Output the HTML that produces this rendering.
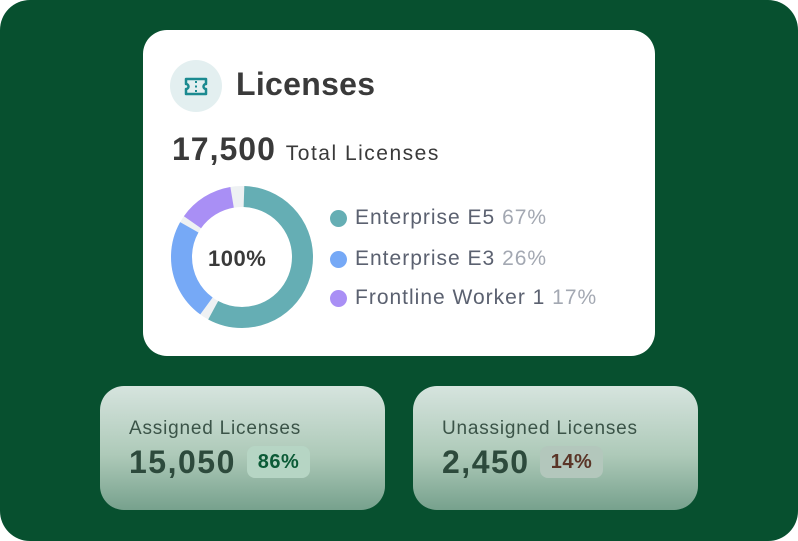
<!DOCTYPE html>
<html><head><meta charset="utf-8"><style>
*{margin:0;padding:0;box-sizing:border-box}
body{width:798px;height:541px;background:#fff;font-family:"Liberation Sans",sans-serif;overflow:hidden;position:relative}
.bg{position:absolute;left:0;top:0;width:798px;height:541px;background:#07502f;border-radius:30px}
.card{position:absolute;left:143px;top:30px;width:512px;height:326px;background:#fff;border-radius:24px}
.ic{position:absolute;left:170px;top:60px;width:52px;height:52px;border-radius:50%;background:#e3eff0}
.t{position:absolute;white-space:nowrap;color:#3a3a3a}
.dot{position:absolute;width:17px;height:17px;border-radius:50%}
.lg{font-size:21px;letter-spacing:1px;color:#5b6170}
.sc{position:absolute;top:386px;width:285px;height:124px;border-radius:24px;background:linear-gradient(#d6e4de,#aecab9 55%,#77a18d)}
.lab{position:absolute;left:29px;top:32px;font-size:19px;letter-spacing:0.8px;color:#3b5448;white-space:nowrap}
.num{position:absolute;left:29px;top:58px;font-size:32px;font-weight:bold;letter-spacing:1.5px;color:#2d4a3c}
.pill{position:absolute;top:60px;height:32px;border-radius:8px;font-size:20px;line-height:32px;text-align:center;font-weight:bold;letter-spacing:0.5px}
</style></head><body>
<div class="bg"></div>
<div class="card"></div>
<div class="ic"><svg width="52" height="52" viewBox="0 0 52 52"><path d="M16 19h20v5a2.5 2.5 0 0 0 0 5v5H16v-5a2.5 2.5 0 0 0 0-5z" fill="none" stroke="#1b8a90" stroke-width="2.5" stroke-linejoin="round"/><path d="M26 21v2M26 25.5v2M26 30v2" stroke="#1b8a90" stroke-width="2"/></svg></div>
<div class="t" style="left:236px;top:66px;font-size:32px;font-weight:bold;letter-spacing:0.3px">Licenses</div>
<div class="t" style="left:172px;top:131px;font-size:32px;font-weight:bold;letter-spacing:1px">17,500 <span style="font-size:21px;font-weight:normal;letter-spacing:1.5px">Total Licenses</span></div>
<svg style="position:absolute;left:171px;top:186px" width="142" height="142" viewBox="0 0 142 142">
<circle cx="71" cy="71" r="60.5" fill="none" stroke="#eef1f3" stroke-width="21"/>
<g transform="rotate(-90 71 71)" fill="none" stroke-width="21">
<circle cx="71" cy="71" r="60.5" stroke="#65aeb4" stroke-dasharray="218 400" stroke-dashoffset="-2"/>
<circle cx="71" cy="71" r="60.5" stroke="#76a9f6" stroke-dasharray="88 400" stroke-dashoffset="-228"/>
<circle cx="71" cy="71" r="60.5" stroke="#a98ff5" stroke-dasharray="48 400" stroke-dashoffset="-322"/>
</g></svg>
<div class="t" style="left:208px;top:246px;font-size:22px;font-weight:bold;letter-spacing:0.5px">100%</div>
<div class="dot" style="left:330px;top:210px;background:#65aeb4"></div>
<div class="dot" style="left:330px;top:251px;background:#76a9f6"></div>
<div class="dot" style="left:330px;top:290px;background:#a98ff5"></div>
<div class="t lg" style="left:355px;top:206px">Enterprise E5 <span style="color:#a3a8b2">67%</span></div>
<div class="t lg" style="left:355px;top:247px">Enterprise E3 <span style="color:#a3a8b2">26%</span></div>
<div class="t lg" style="left:355px;top:286px">Frontline Worker 1 <span style="color:#a3a8b2">17%</span></div>
<div class="sc" style="left:100px"><div class="lab">Assigned Licenses</div><div class="num">15,050</div><div class="pill" style="left:147px;width:63px;background:#b6d5c4;color:#0b5a36">86%</div></div>
<div class="sc" style="left:413px"><div class="lab">Unassigned Licenses</div><div class="num">2,450</div><div class="pill" style="left:127px;width:63px;background:#b3c7bc;color:#5a3527">14%</div></div>
</body></html>
